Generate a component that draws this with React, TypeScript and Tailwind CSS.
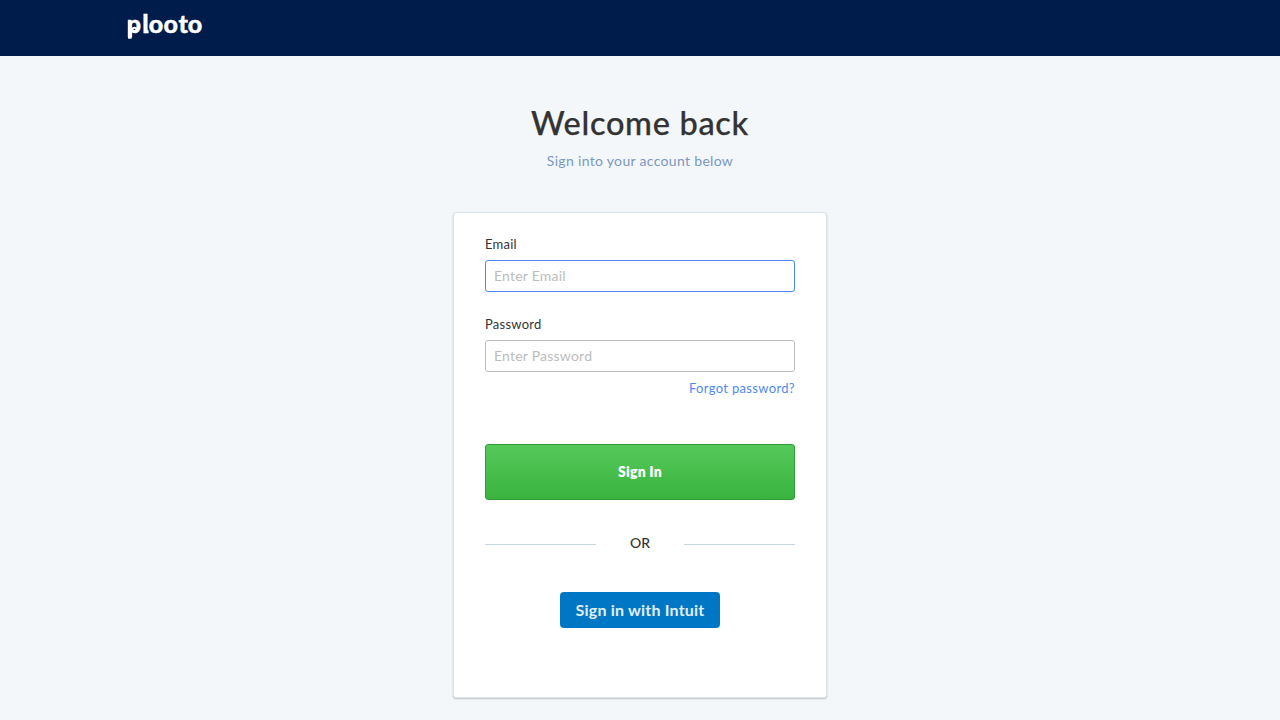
import React from "react";

function Logo() {
  return (
    <a href="#" aria-label="plooto" className="ml-[120px] block h-11 w-24">
      <svg width="96" height="44" viewBox="120 6 96 44" fill="none" className="block">
        <text
          x="126.8 142.2 148.7 163.6 178.4 187.8"
          y="33.3"
          fill="#fff"
          stroke="#fff"
          strokeWidth="0.4"
          className="font-['Lato',sans-serif] text-[25px] font-black"
        >
          plooto
        </text>
        <path d="M145.6 29q0 3 3 2.8" stroke="#fff" strokeWidth="3" />
        <path d="M128 20.3h3.6v18.4H128z" fill="#fff" />
        <circle cx="134.5" cy="29.6" r="1.9" stroke="#fff" strokeWidth="1.9" />
      </svg>
    </a>
  );
}

function Field({ label, type, placeholder, active }: { label: string; type: string; placeholder: string; active?: boolean }) {
  return (
    <label className="block">
      <span className="block h-5 text-[13px] leading-5 tracking-[0.25px] text-[#333]">{label}</span>
      <input
        type={type}
        placeholder={placeholder}
        className={
          "mt-[6px] block h-8 w-full rounded-[3px] border bg-white px-2 pb-[2px] text-[14px] tracking-[0.22px] outline-none placeholder:text-[#bcbcbc] " +
          (active ? "border-[#5089eb]" : "border-[#bcbcbc]")
        }
      />
    </label>
  );
}

export default function App() {
  return (
    <div className="h-[720px] w-full overflow-hidden bg-[#f3f7fa] font-['Lato',sans-serif] text-[#333]">
      <header className="h-14 bg-[#001c4b] pt-[6px]">
        <Logo />
      </header>
      <main className="flex flex-col items-center">
        <h1 className="mt-[43px] h-12 whitespace-nowrap text-[32.5px] leading-[48px] font-medium tracking-[0.7px] [-webkit-text-stroke:0.25px_#333]">Welcome back</h1>
        <p className="mt-1 h-5 whitespace-nowrap text-[14px] leading-5 tracking-[0.32px] text-[#7b98bf]">Sign into your account below</p>
        <section className="mt-[41px] h-[486px] w-[374px] rounded-[3px] border border-[#dce2e9] bg-white px-[31px] pt-[21px] shadow-[0_1px_2px_rgba(0,0,0,0.22)]">
          <form>
            <Field label="Email" type="email" placeholder="Enter Email" active />
            <div className="mt-[22px]">
              <Field label="Password" type="password" placeholder="Enter Password" />
            </div>
            <div className="mt-[6px] flex h-5 justify-end">
              <a href="#" className="whitespace-nowrap text-[13px] leading-5 tracking-[0.33px] text-[#5089f4]">Forgot password?</a>
            </div>
            <button type="button" className="mt-[46px] block h-14 w-full rounded-[3px] border border-[#309a3a] bg-linear-to-b from-[#55c95a] to-[#3ab33f] pb-[2px] text-[14px] font-extrabold tracking-[0.25px] text-white">
              Sign In
            </button>
          </form>
          <div className="mt-[34px] flex h-5 items-center justify-between">
            <span className="mt-px h-px w-[111px] bg-[#c5d7e0]" />
            <span className="pb-[2px] text-[14px] leading-5 font-medium">OR</span>
            <span className="mt-px h-px w-[111px] bg-[#c5d7e0]" />
          </div>
          <button type="button" className="mx-auto mt-[38px] block h-9 w-[160px] whitespace-nowrap rounded-[4px] bg-[#0077c5] text-[16px] font-bold tracking-[0.2px] text-[#e0effa]">
            Sign in with Intuit
          </button>
        </section>
      </main>
    </div>
  );
}
